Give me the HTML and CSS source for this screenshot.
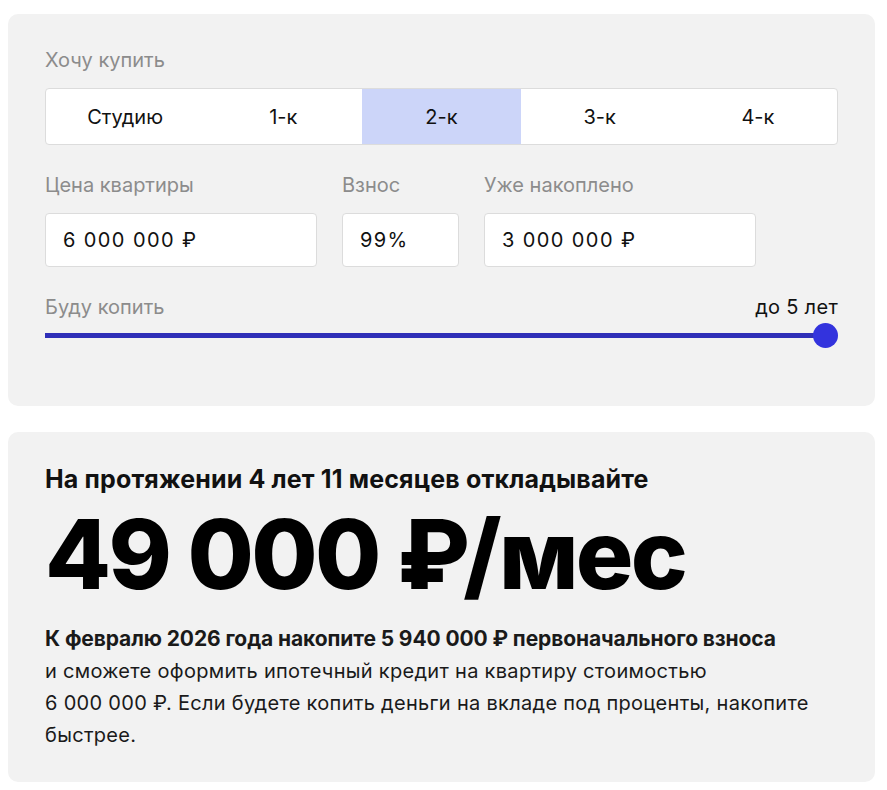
FILE: index.html
```html
<!DOCTYPE html>
<html lang="ru">
<head>
  <meta charset="UTF-8">
  <title>Накопления на ипотеку</title>
  <link rel="stylesheet" href="styles.css">
</head>
<body>

  <section class="card calc">
    <div class="label">Хочу купить</div>
    <div class="rooms">
      <div class="room">Студию</div>
      <div class="room">1-к</div>
      <div class="room active">2-к</div>
      <div class="room">3-к</div>
      <div class="room">4-к</div>
    </div>

    <div class="fields">
      <div class="field field-wide">
        <div class="label">Цена квартиры</div>
        <div class="input">6 000 000 ₽</div>
      </div>
      <div class="field field-small">
        <div class="label">Взнос</div>
        <div class="input">99%</div>
      </div>
      <div class="field field-wide">
        <div class="label">Уже накоплено</div>
        <div class="input">3 000 000 ₽</div>
      </div>
    </div>

    <div class="term">
      <span class="label">Буду копить</span>
      <span class="term-value">до 5 лет</span>
    </div>
    <div class="slider">
      <div class="track"></div>
      <div class="thumb"></div>
    </div>
  </section>

  <section class="card result">
    <h2>На протяжении 4 лет 11 месяцев откладывайте</h2>
    <div class="amount">49&nbsp;000&nbsp;₽/мес</div>
    <p class="note">
      <b>К февралю 2026 года накопите 5&nbsp;940&nbsp;000&nbsp;₽ первоначального взноса</b><br>
      и сможете оформить ипотечный кредит на квартиру стоимостью 6&nbsp;000&nbsp;000&nbsp;₽. Если будете копить деньги на вкладе под проценты, накопите быстрее.
    </p>
  </section>

</body>
</html>
```

FILE: styles.css
```css
body {
  font-family: Inter, 'Noto Sans', sans-serif;
  background-color: #fff;
  color: #111;
  margin: 0;
  padding: 14px 12px 0 8px;
}

.card {
  background-color: #f2f2f2;
  border-radius: 10px;
  padding: 0 37px;
}

.calc {
  height: 392px;
  padding-top: 34px;
  box-sizing: border-box;
}

.label {
  color: #8c8c8c;
  font-size: 20px;
  line-height: 24px;
}

.rooms {
  display: grid;
  grid-template-columns: repeat(5, 1fr);
  margin-top: 16px;
  height: 55px;
  background: #fff;
  border: 1px solid #dcdcdc;
  border-radius: 4px;
  overflow: hidden;
}

.room {
  display: flex;
  align-items: center;
  justify-content: center;
  font-size: 20px;
  color: #111;
}

.room.active {
  background-color: #ccd5f9;
}

.fields {
  display: flex;
  gap: 25px;
  margin-top: 28px;
}

.field-wide {
  width: 272px;
}

.field-small {
  width: 117px;
}

.input {
  margin-top: 16px;
  height: 54px;
  box-sizing: border-box;
  background: #fff;
  border: 1px solid #dcdcdc;
  border-radius: 4px;
  padding: 0 17px;
  display: flex;
  align-items: center;
  font-size: 20px;
  letter-spacing: 1.4px;
}

.term {
  display: flex;
  justify-content: space-between;
  margin-top: 28px;
}

.term-value {
  font-size: 20px;
  line-height: 24px;
  letter-spacing: 0.3px;
}

.slider {
  position: relative;
  height: 26px;
  margin-top: 3px;
}

.track {
  position: absolute;
  left: 0;
  right: 12px;
  top: 11px;
  height: 5px;
  background-color: #2f2fb8;
}

.thumb {
  position: absolute;
  right: 0;
  top: 1px;
  width: 25px;
  height: 25px;
  border-radius: 50%;
  background-color: #3333dd;
}

.result {
  margin-top: 26px;
  padding-top: 32px;
  padding-bottom: 31px;
}

.result h2 {
  margin: 0;
  font-size: 25px;
  line-height: 30px;
  font-weight: 700;
  letter-spacing: 0.15px;
  color: #111;
}

.amount {
  font-size: 96px;
  font-weight: 800;
  line-height: 1;
  margin-top: 12px;
  letter-spacing: -2.7px;
  color: #000;
}

.note {
  max-width: 780px;
  margin: 21px 0 0;
  font-size: 20px;
  line-height: 32px;
  letter-spacing: 0.3px;
  color: #1a1a1a;
}

.note b {
  font-size: 21px;
  letter-spacing: -0.1px;
  font-weight: 700;
}
```
